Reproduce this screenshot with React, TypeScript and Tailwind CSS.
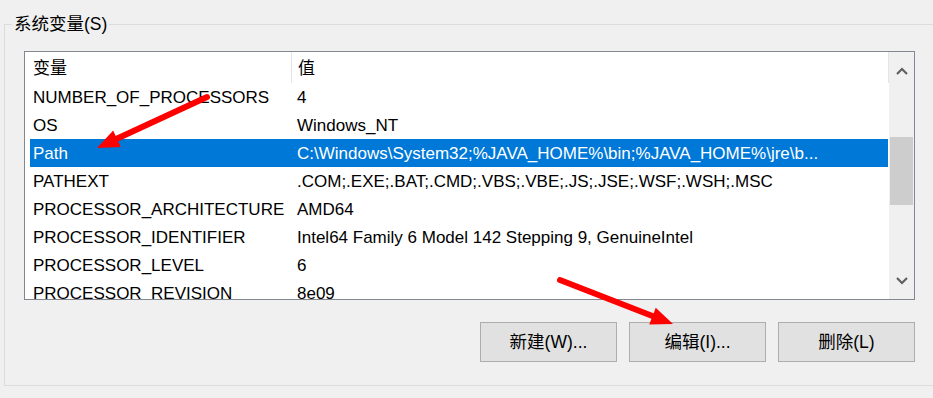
const rows: [string, string][] = [
  ["NUMBER_OF_PROCESSORS", "4"],
  ["OS", "Windows_NT"],
  ["Path", "C:\\Windows\\System32;%JAVA_HOME%\\bin;%JAVA_HOME%\\jre\\b..."],
  ["PATHEXT", ".COM;.EXE;.BAT;.CMD;.VBS;.VBE;.JS;.JSE;.WSF;.WSH;.MSC"],
  ["PROCESSOR_ARCHITECTURE", "AMD64"],
  ["PROCESSOR_IDENTIFIER", "Intel64 Family 6 Model 142 Stepping 9, GenuineIntel"],
  ["PROCESSOR_LEVEL", "6"],
  ["PROCESSOR_REVISION", "8e09"],
];

const font = "font-['Liberation_Sans','Noto_Sans_CJK_SC',sans-serif]";

function Arrow({ x1, y1, x2, y2 }: { x1: number; y1: number; x2: number; y2: number }) {
  const dx = x2 - x1;
  const dy = y2 - y1;
  const len = Math.hypot(dx, dy);
  const ux = dx / len;
  const uy = dy / len;
  const bx = x2 - ux * 22;
  const by = y2 - uy * 22;
  const px = -uy * 9;
  const py = ux * 9;
  return (
    <g>
      <line x1={x1} y1={y1} x2={bx + ux * 2} y2={by + uy * 2} stroke="#ff0000" strokeWidth={6} strokeLinecap="round" />
      <polygon points={`${x2},${y2} ${bx + px},${by + py} ${bx - px},${by - py}`} fill="#ff0000" />
    </g>
  );
}

export default function App() {
  return (
    <div className={`relative h-[398px] w-[933px] overflow-hidden bg-[#f0f0f0] text-[17px] text-black ${font}`}>
      <div className="pt-[24px] pl-[4px]">
        <div className="relative h-[362px] w-[960px] border border-[#dcdcdc] pl-[19px] pt-[26px]">
          <div className="absolute -top-[13px] left-[7px] bg-[#f0f0f0] px-[2px] text-[17.5px] leading-[24px]">系统变量(S)</div>

          <div className="flex h-[249px] w-[891px] border border-[#828790] bg-white">
            <div className="flex-1 overflow-hidden">
              <div className="flex h-[31px] items-center">
                <div className="flex h-full w-[267px] items-center border-r border-[#e5e5e5] pl-[8px] pt-[2px]">变量</div>
                <div className="flex h-full flex-1 items-center border-r border-[#e5e5e5] pl-[6px] pt-[2px]">值</div>
              </div>
              {rows.map(([name, value]) => {
                const sel = name === "Path";
                return (
                  <div
                    key={name}
                    className={`ml-[5px] mr-[1px] flex h-[28px] items-center whitespace-nowrap pt-[1px] ${sel ? "bg-[#0078d7] text-white" : ""}`}
                  >
                    <div className="w-[263px] pl-[3px]">{name}</div>
                    <div className="flex-1 pl-[4px]">{value}</div>
                  </div>
                );
              })}
            </div>
            <div className="flex w-[25px] flex-col bg-[#f0f0f0]">
              <div className="flex h-[31px] items-center justify-center pt-[6px]">
                <svg width="12" height="8" viewBox="0 0 12 8">
                  <path d="M1 7 L6 2 L11 7" fill="none" stroke="#606060" strokeWidth="2.2" />
                </svg>
              </div>
              <div className="mt-[54px] ml-[1px] h-[68px] w-[23px] bg-[#cdcdcd]" />
              <div className="flex-1" />
              <div className="flex h-[31px] items-center justify-center pb-[6px]">
                <svg width="12" height="8" viewBox="0 0 12 8">
                  <path d="M1 1 L6 6 L11 1" fill="none" stroke="#606060" strokeWidth="2.2" />
                </svg>
              </div>
            </div>
          </div>

          <div className="mt-[22px] flex w-[891px] justify-end gap-[12px]">
            {["新建(W)...", "编辑(I)...", "删除(L)"].map((t) => (
              <button
                key={t}
                className="flex h-[40px] w-[137px] items-center justify-center border border-[#adadad] bg-[#e1e1e1] text-[17.5px]"
              >
                {t}
              </button>
            ))}
          </div>
        </div>
      </div>

      <svg className="pointer-events-none absolute inset-0" width="933" height="398">
        <Arrow x1={207} y1={97} x2={97} y2={148} />
        <Arrow x1={560} y1={280} x2={673} y2={324} />
      </svg>
    </div>
  );
}
